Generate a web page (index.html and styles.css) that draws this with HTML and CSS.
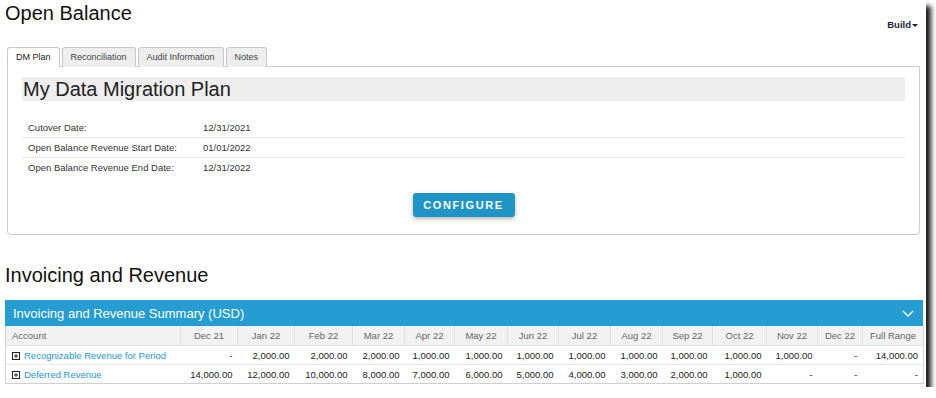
FILE: index.html
```html
<!DOCTYPE html>
<html lang="en">
<head>
  <meta charset="UTF-8">
  <title>Open Balance</title>
  <link rel="stylesheet" href="styles.css">
</head>
<body>

<div class="window">
  <header class="page-header">
    <h1>Open Balance</h1>
    <span class="build-menu">Build<span class="caret"></span></span>
  </header>

  <!-- Tabs -->
  <ul class="tabs">
    <li class="tab active">DM Plan</li>
    <li class="tab">Reconciliation</li>
    <li class="tab">Audit Information</li>
    <li class="tab">Notes</li>
  </ul>

  <div class="tab-panel">
    <h2 class="plan-title">My Data Migration Plan</h2>

    <div class="fields">
      <div class="field-row">
        <span class="field-label">Cutover Date:</span>
        <span class="field-value">12/31/2021</span>
      </div>
      <div class="field-row">
        <span class="field-label">Open Balance Revenue Start Date:</span>
        <span class="field-value">01/01/2022</span>
      </div>
      <div class="field-row">
        <span class="field-label">Open Balance Revenue End Date:</span>
        <span class="field-value">12/31/2022</span>
      </div>
    </div>

    <div class="actions">
      <button class="btn-configure">Configure</button>
    </div>
  </div>

  <h2 class="section-title">Invoicing and Revenue</h2>

  <div class="summary">
    <div class="summary-bar">
      <span>Invoicing and Revenue Summary (USD)</span>
      <svg class="chevron" width="12" height="7" viewBox="0 0 12 7">
        <polyline points="1,1 6,6 11,1" fill="none" stroke="#fff" stroke-width="1.3"/>
      </svg>
    </div>

    <table class="summary-table">
      <colgroup>
        <col><col><col><col><col><col><col><col><col><col><col><col><col><col><col>
      </colgroup>
      <thead>
        <tr>
          <th>Account</th>
          <th>Dec 21</th><th>Jan 22</th><th>Feb 22</th><th>Mar 22</th>
          <th>Apr 22</th><th>May 22</th><th>Jun 22</th><th>Jul 22</th>
          <th>Aug 22</th><th>Sep 22</th><th>Oct 22</th><th>Nov 22</th>
          <th>Dec 22</th><th>Full Range</th>
        </tr>
      </thead>
      <tbody>
        <tr>
          <td class="account"><svg class="expand" width="8" height="8" viewBox="0 0 8 8">
              <rect x="0.5" y="0.5" width="7" height="7" fill="#fff" stroke="#222"/>
              <line x1="2" y1="4" x2="6" y2="4" stroke="#222"/>
              <line x1="4" y1="2" x2="4" y2="6" stroke="#222"/>
            </svg><a href="#">Recognizable Revenue for Period</a></td>
          <td>-</td><td>2,000.00</td><td>2,000.00</td><td>2,000.00</td>
          <td>1,000.00</td><td>1,000.00</td><td>1,000.00</td><td>1,000.00</td>
          <td>1,000.00</td><td>1,000.00</td><td>1,000.00</td><td>1,000.00</td>
          <td>-</td><td>14,000.00</td>
        </tr>
        <tr>
          <td class="account"><svg class="expand" width="8" height="8" viewBox="0 0 8 8">
              <rect x="0.5" y="0.5" width="7" height="7" fill="#fff" stroke="#222"/>
              <line x1="2" y1="4" x2="6" y2="4" stroke="#222"/>
              <line x1="4" y1="2" x2="4" y2="6" stroke="#222"/>
            </svg><a href="#">Deferred Revenue</a></td>
          <td>14,000.00</td><td>12,000.00</td><td>10,000.00</td><td>8,000.00</td>
          <td>7,000.00</td><td>6,000.00</td><td>5,000.00</td><td>4,000.00</td>
          <td>3,000.00</td><td>2,000.00</td><td>1,000.00</td><td>-</td>
          <td>-</td><td>-</td>
        </tr>
      </tbody>
    </table>
  </div>
</div>

</body>
</html>
```

FILE: styles.css
```css
body {
  margin: 0;
  background-color: #fff;
  font-family: 'Liberation Sans', Arial, Helvetica, sans-serif;
  color: #222;
}

.window {
  width: 926px;
  height: 387px;
  background-color: #fff;
  box-shadow: 5px 6px 5px rgba(0, 0, 0, 0.9);
  overflow: hidden;
}

/* Page header */
.page-header {
  display: flex;
  justify-content: space-between;
  align-items: flex-start;
  height: 47px;
  padding: 2px 8px 0 5px;
  box-sizing: border-box;
}

h1 {
  margin: 0;
  font-size: 20px;
  font-weight: normal;
  line-height: 23px;
  color: #111;
}

.build-menu {
  margin-top: 17px;
  font-size: 9.5px;
  font-weight: bold;
  color: #1c1c44;
}

.caret {
  display: inline-block;
  margin-left: 1px;
  vertical-align: middle;
  border-left: 3px solid transparent;
  border-right: 3px solid transparent;
  border-top: 3px solid #1c1c44;
}

/* Tabs */
.tabs {
  display: flex;
  gap: 2px;
  list-style: none;
  margin: 0 0 -1px 7px;
  padding: 0;
}

.tab {
  height: 20px;
  padding: 0 8px;
  box-sizing: border-box;
  border: 1px solid #c9c9c9;
  border-bottom: none;
  border-radius: 3px 3px 0 0;
  background-color: #eee;
  font-size: 9px;
  line-height: 19px;
  color: #444;
}

.tab.active {
  background-color: #fff;
  color: #222;
}

.tab-panel {
  margin: 0 6px 0 7px;
  padding: 10px 14px 17px;
  border: 1px solid #ccc;
  border-radius: 0 0 4px 4px;
}

.plan-title {
  margin: 0;
  height: 24px;
  padding-left: 1px;
  background-color: #eee;
  font-size: 20px;
  font-weight: normal;
  line-height: 25px;
  color: #222;
}

.fields {
  margin-top: 17px;
}

.field-row {
  display: flex;
  height: 20px;
  box-sizing: border-box;
  border-bottom: 1px solid #e6e6e6;
  font-size: 9.5px;
  line-height: 20px;
  color: #333;
}

.field-row:last-child {
  border-bottom: none;
}

.field-label {
  width: 175px;
  padding-left: 6px;
}

.actions {
  display: flex;
  justify-content: center;
  margin-top: 15px;
}

.btn-configure {
  width: 102px;
  height: 24px;
  padding: 0;
  border: none;
  border-radius: 3px;
  background-color: #1f94c6;
  box-shadow: 0 2px 4px rgba(0, 0, 0, 0.3);
  color: #fff;
  font-family: inherit;
  font-size: 11px;
  font-weight: bold;
  letter-spacing: 1.6px;
  text-transform: uppercase;
  cursor: pointer;
}

/* Invoicing section */
.section-title {
  margin: 29px 0 13px 5px;
  font-size: 20px;
  font-weight: normal;
  line-height: 23px;
  color: #111;
}

.summary {
  margin: 0 3px 0 5px;
}

.summary-bar {
  display: flex;
  justify-content: space-between;
  align-items: center;
  height: 26px;
  padding: 0 9px 0 8px;
  background-color: #259dd2;
  color: #fff;
  font-size: 13px;
}

.chevron {
  margin-top: 1px;
}

.summary-table {
  width: 100%;
  table-layout: fixed;
  border-collapse: collapse;
  border-left: 1px solid #d4d4d4;
  border-right: 1px solid #d4d4d4;
  font-size: 9.5px;
}

.summary-table col:nth-child(1) { width: 175px; }
.summary-table col:nth-child(2) { width: 57px; }
.summary-table col:nth-child(3) { width: 57px; }
.summary-table col:nth-child(4) { width: 58px; }
.summary-table col:nth-child(5) { width: 52px; }
.summary-table col:nth-child(6) { width: 50px; }
.summary-table col:nth-child(7) { width: 53px; }
.summary-table col:nth-child(8) { width: 51px; }
.summary-table col:nth-child(9) { width: 52px; }
.summary-table col:nth-child(10) { width: 52px; }
.summary-table col:nth-child(11) { width: 50px; }
.summary-table col:nth-child(12) { width: 54px; }
.summary-table col:nth-child(13) { width: 51px; }
.summary-table col:nth-child(14) { width: 45px; }
.summary-table col:nth-child(15) { width: 61px; }

.summary-table th {
  height: 19px;
  padding: 0;
  background-color: #f2f2f2;
  border-left: 1px solid #e0e0e0;
  border-bottom: 1px solid #e4e4e4;
  font-weight: normal;
  color: #666;
  text-align: center;
}

.summary-table th:first-child {
  padding-left: 6px;
  text-align: left;
  border-left: none;
}

.summary-table td {
  height: 18px;
  padding: 0 5px 0 0;
  border-bottom: 1px solid #e6e6e6;
  text-align: right;
  white-space: nowrap;
  color: #222;
}

.summary-table tbody tr:last-child td {
  border-bottom: 1px solid #cfcfcf;
}

.summary-table td.account {
  padding-left: 6px;
  text-align: left;
}

.expand {
  margin-right: 4px;
  vertical-align: -1px;
}

.account a {
  color: #1b98d3;
  text-decoration: none;
}
```
